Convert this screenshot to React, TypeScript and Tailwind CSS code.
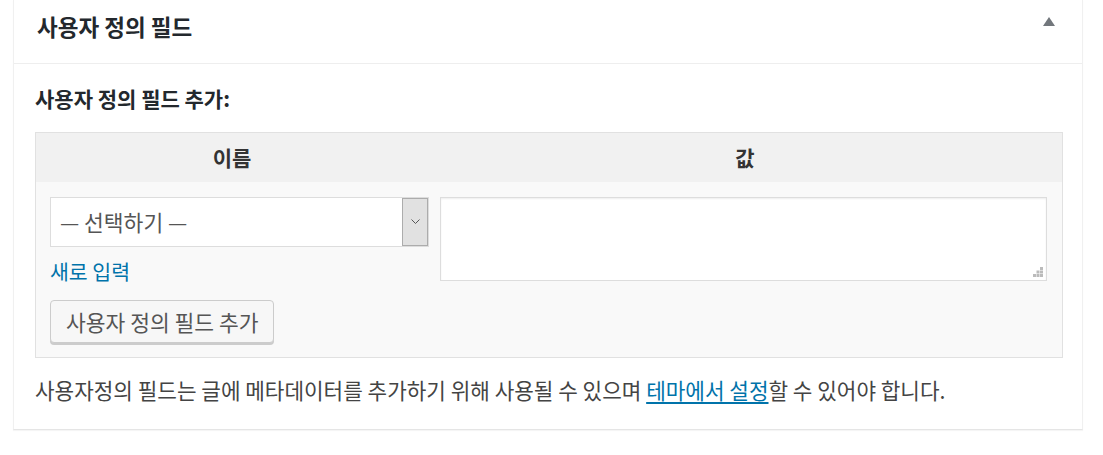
export default function App() {
  return (
    <div className="min-h-screen bg-white font-['Noto_Sans_CJK_KR','Noto_Sans',sans-serif] text-[#444]">
      <div className="ml-[13px] w-[1070px] border-x border-b border-x-[#f0f0f0] border-b-[#e5e5e5] bg-white shadow-[0_1px_1px_rgba(0,0,0,0.04)]">
        {/* header */}
        <div className="flex h-[64px] items-start justify-between border-b border-[#eeeeee] pl-[23px] pr-[27px]">
          <h2 className="pt-[12px] text-[22.5px] font-bold leading-[28px] text-[#23282d]">
            사용자 정의 필드
          </h2>
          <span className="mt-[17px] h-0 w-0 border-x-[6px] border-b-[9px] border-x-transparent border-b-[#72777c]" />
        </div>

        {/* body */}
        <div className="pb-[24px] pl-[21px] pr-[19px] pt-[19px]">
          <p className="text-[21px] font-bold leading-[30px] text-[#23282d]">
            사용자 정의 필드 추가:
          </p>

          <div className="mt-[19px] border border-[#e1e1e1] bg-[#f9f9f9]">
            <div className="flex h-[49px] items-center bg-[#f1f1f1] text-[21px] font-bold text-[#333]">
              <div className="w-[392px] text-center">이름</div>
              <div className="flex-1 text-center">값</div>
            </div>

            <div className="flex items-start gap-[11px] pb-[14px] pl-[14px] pr-[15px] pt-[15px]">
              <div className="flex w-[379px] flex-col">
                <div className="flex h-[50px] items-stretch border border-[#dddddd] bg-white">
                  <span className="flex flex-1 items-center pl-[9px] text-[21.5px] text-[#555]">
                    — 선택하기 —
                  </span>
                  <span className="flex w-[26px] items-center justify-center border border-[#acacac] bg-[#e1e1e1]">
                    <svg width="9" height="6" viewBox="0 0 9 6">
                      <path d="M0.5 0.5 L4.5 4.5 L8.5 0.5" fill="none" stroke="#555" strokeWidth="1" />
                    </svg>
                  </span>
                </div>
                <a href="#" className="mt-[9px] text-[20.5px] leading-[30px] text-[#0073aa]">
                  새로 입력
                </a>
                <div className="mt-[14px]">
                  <button className="h-[43px] rounded-[4px] border border-[#cccccc] bg-[#f7f7f7] px-[15px] text-[21.5px] leading-none text-[#555] shadow-[0_2px_0_#cccccc]">
                    사용자 정의 필드 추가
                  </button>
                </div>
              </div>

              <div className="relative h-[84px] flex-1 border border-[#dddddd] bg-white shadow-[inset_0_1px_2px_rgba(0,0,0,0.07)]">
                <svg className="absolute bottom-[3px] right-[3px]" width="10" height="10" viewBox="0 0 10 10">
                  <g fill="#bbbbbb">
                    <rect x="7" y="0" width="3" height="3" />
                    <rect x="3.5" y="3.5" width="3" height="3" />
                    <rect x="7" y="3.5" width="3" height="3" />
                    <rect x="0" y="7" width="3" height="3" />
                    <rect x="3.5" y="7" width="3" height="3" />
                    <rect x="7" y="7" width="3" height="3" />
                  </g>
                </svg>
              </div>
            </div>
          </div>

          <p className="mt-[17px] text-[21.3px] leading-[30px] text-[#444]">
            사용자정의 필드는 글에 메타데이터를 추가하기 위해 사용될 수 있으며{" "}
            <a href="#" className="text-[#0073aa] underline underline-offset-[3px]">
              테마에서 설정
            </a>
            할 수 있어야 합니다.
          </p>
        </div>
      </div>
    </div>
  );
}
